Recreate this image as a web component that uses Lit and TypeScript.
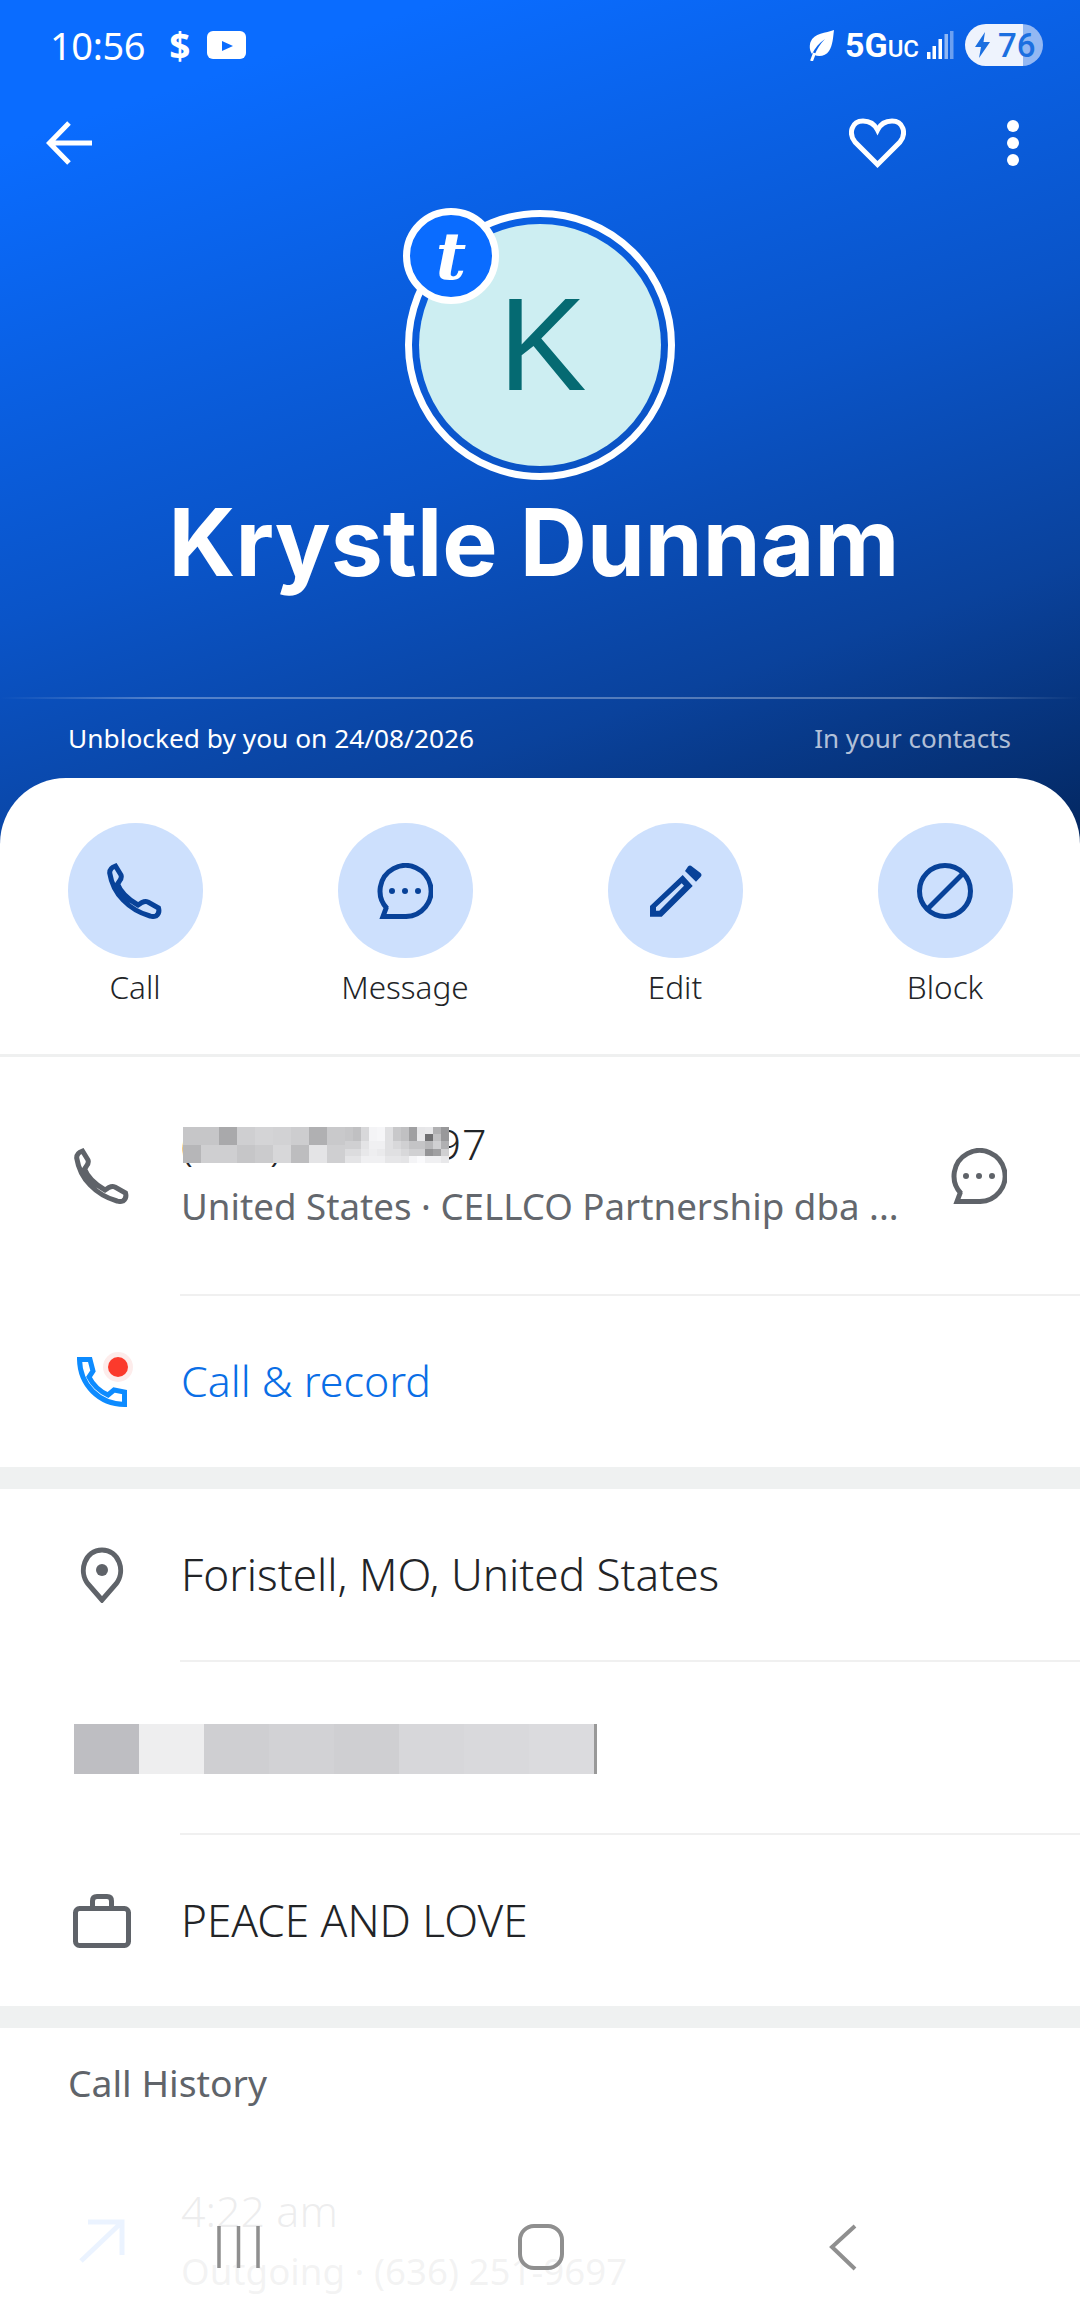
import { LitElement, html, css } from "lit";
import { customElement } from "lit/decorators.js";

const PHONE = "M8.5 3 L14 12 Q15 15 12.5 18 L10.5 21 Q15 33 31 42 L35 39.5 Q38 38 41 39 L51.5 45 Q53 50 49 53 Q46 54 43 53 C22 47 6 31 2.7 10 Q2.5 5 8.5 3 Z";

const phoneIcon = () => html`<svg class="stroke" width="56" height="56" viewBox="0 0 56 56"><path d=${PHONE} /></svg>`;

const messageIcon = () => html`<svg class="stroke" width="56" height="56" viewBox="0 0 56 56">
  <path d="M10 45.5 A25.5 25.5 0 1 1 28 53.5 H6 L9.5 44" />
  <circle class="solid" cx="15" cy="28" r="3" />
  <circle class="solid" cx="28" cy="28" r="3" />
  <circle class="solid" cx="41" cy="28" r="3" />
</svg>`;

const editIcon = () => html`<svg class="solid" width="56" height="56" viewBox="0 0 56 56">
  <path fill-rule="evenodd" d="M3 43 L35.7 12 L45.7 23 L14.7 53.7 H3 Z M9 44.3 V47.7 H12.3 L37 22.7 L34.7 20.3 Z" />
  <path d="M38 8 L41 3.5 Q43 1.5 45 3.5 L53.5 10 Q55.5 12 53.5 14 L49 18.7 Z" />
</svg>`;

const blockIcon = () => html`<svg class="stroke" width="56" height="56" viewBox="0 0 56 56">
  <circle cx="28" cy="28" r="25.5" />
  <path d="M10.5 46 L46 10.5" />
</svg>`;

const ACTIONS = [
  { label: "Call", icon: phoneIcon },
  { label: "Message", icon: messageIcon },
  { label: "Edit", icon: editIcon },
  { label: "Block", icon: blockIcon },
];

// mosaic over the phone number: big blocks first, then the finer part
const COARSE = [
  ["c6c6c8", "c6c6c8", "a9a9ab", "cfcfd1", "d4d4d6", "d2d2d4", "cdcdcf", "b0b0b2", "c9c9cb"],
  ["b6b6b8", "cfcfd1", "cfcfd1", "c6c6c8", "cbcbcd", "d7d7d9", "bdbdbf", "e4e4e6", "cfcfd1"],
];
const FINE = [
  [0xc6, 0xc0, 0xd8, 0xf4, 0xf6, 0xe0, 0xc8, 0xc0, 0xa0, 0xe6, 0xe8, 0xb0, 0x98],
  [0xc6, 0xc0, 0xd8, 0xf4, 0xf6, 0xe0, 0xc8, 0xc0, 0xa0, 0xe8, 0x70, 0xc0, 0x98],
  [0xd0, 0xd0, 0xe4, 0xf0, 0xf0, 0xe0, 0xd8, 0xd0, 0xc4, 0xc4, 0xb8, 0xd0, 0xb0],
  [0xdc, 0xdc, 0xe8, 0xee, 0xea, 0xe0, 0xe0, 0xd8, 0xd0, 0xd0, 0x94, 0xa0, 0xd0],
  [0xe4, 0xe4, 0xf0, 0xf0, 0xf0, 0xe6, 0xe6, 0xe4, 0xf4, 0xfa, 0xf0, 0xf0, 0xe8],
];
const NAME_BLOCKS = ["bebec2", "eeeeef", "cfcfd2", "d2d2d5", "cfcfd2", "d7d7da", "d9d9dc", "dbdbde"];

@customElement("app-root")
export class AppRoot extends LitElement {
  static styles = css`
    :host {
      display: block;
      width: 1080px;
      height: 2316px;
      overflow: hidden;
      position: relative;
      font-family: "Noto Sans", sans-serif;
      color: #222427;
      background: linear-gradient(162deg, #0a6cff 0%, #0a6cff 12%, #0a54c8 52%, #0a429c 76%, #03265e 100%) 0 0 / 1080px 850px no-repeat;
    }
    svg {
      display: block;
      flex: none;
    }
    .stroke {
      fill: none;
      stroke: currentColor;
      stroke-width: 5;
    }
    .solid {
      fill: currentColor;
      stroke: none;
    }

    /* status bar */
    .status {
      height: 90px;
      display: flex;
      align-items: center;
      justify-content: space-between;
      padding: 0 37px 0 50px;
      color: #fff;
    }
    .status-side {
      display: flex;
      align-items: center;
    }
    .time {
      font-size: 38px;
      letter-spacing: -0.4px;
    }
    .dollar {
      font-size: 37px;
      font-weight: 700;
      margin: 0 17px 0 24px;
    }
    .net {
      font-family: Roboto, sans-serif;
      font-weight: 700;
      font-size: 34px;
      margin: 0 8px 0 11px;
    }
    .net small {
      font-size: 24px;
      font-weight: 500;
    }
    .battery {
      width: 78px;
      height: 42px;
      margin-left: 11px;
      border-radius: 21px;
      background: linear-gradient(90deg, #eef3fd 74%, #93b8f3 74%);
      color: #1b6fe0;
      display: flex;
      align-items: center;
      padding-left: 10px;
      box-sizing: border-box;
      font-family: Roboto, sans-serif;
      font-weight: 500;
      font-size: 33px;
      gap: 8px;
    }

    /* toolbar */
    .toolbar {
      height: 106px;
      display: flex;
      align-items: center;
      padding: 0 61px 0 46px;
      color: #fff;
    }
    .toolbar .heart {
      margin-left: auto;
      margin-right: 101px;
    }

    /* avatar and name */
    .avatar {
      position: relative;
      width: 270px;
      height: 270px;
      margin: 14px auto 0;
      box-sizing: border-box;
      border: 7px solid #fff;
      border-radius: 50%;
      padding: 7px;
    }
    .avatar-fill {
      height: 100%;
      box-sizing: border-box;
      padding: 0 0 2px 5px;
      border-radius: 50%;
      background: #cdeef2;
      color: #056a72;
      display: flex;
      align-items: center;
      justify-content: center;
      font-family: "Liberation Sans", sans-serif;
      font-size: 132px;
    }
    .badge {
      position: absolute;
      left: -9px;
      top: -9px;
      width: 96px;
      height: 96px;
      box-sizing: border-box;
      border: 7px solid #fff;
      border-radius: 50%;
      background: #0a6cff;
      color: #fff;
      display: flex;
      align-items: center;
      justify-content: center;
      font-family: "DejaVu Serif", serif;
      font-style: italic;
      font-weight: 700;
      font-size: 66px;
      line-height: 1;
    }
    .name {
      height: 124px;
      line-height: 124px;
      text-align: center;
      padding-right: 12px;
      color: #fff;
      font-family: Inter, sans-serif;
      font-weight: 700;
      font-size: 93px;
      white-space: nowrap;
    }
    .rule {
      height: 2px;
      margin-top: 93px;
      background: linear-gradient(90deg, transparent, rgba(255, 255, 255, 0.3) 15%, rgba(255, 255, 255, 0.3) 85%, transparent);
    }
    .info {
      height: 77px;
      padding: 0 69px 2px 68px;
      display: flex;
      align-items: center;
      justify-content: space-between;
      font-size: 26.3px;
      color: #fff;
    }
    .info .dim {
      font-size: 26px;
      color: rgba(255, 255, 255, 0.7);
    }

    /* white sheet */
    .sheet {
      background: #fff;
      border-radius: 66px 66px 0 0;
      height: 1538px;
    }
    .actions {
      display: grid;
      grid-template-columns: repeat(4, 270px);
      height: 231px;
      padding-top: 45px;
      border-bottom: 3px solid #eff0f0;
    }
    .action {
      display: flex;
      flex-direction: column;
      align-items: center;
    }
    .action-circle {
      width: 135px;
      height: 135px;
      border-radius: 50%;
      background: #cde0fd;
      color: #084299;
      display: flex;
      align-items: center;
      justify-content: center;
    }
    .action-label {
      margin-top: 7px;
      line-height: 44px;
      font-size: 31.5px;
      font-weight: 300;
    }

    .row {
      height: 171px;
      display: flex;
      align-items: center;
      padding: 0 73px;
      color: #5f6369;
    }
    .row.tall {
      height: 237px;
    }
    .icon-box {
      width: 58px;
      margin-right: 50px;
      flex: none;
      display: flex;
      justify-content: center;
      position: relative;
    }
    .row-text {
      font-size: 44.1px;
      font-weight: 300;
      color: #222427;
      padding-bottom: 2px;
    }
    .row-text.link {
      color: #0a6ee6;
      font-size: 42.9px;
    }
    .lines {
      flex: 1;
      min-width: 0;
    }
    .line {
      line-height: 61px;
      font-size: 43px;
      font-weight: 300;
      color: #222427;
      white-space: nowrap;
    }
    .line.sub {
      font-size: 36.7px;
      font-weight: 400;
      color: #63676d;
    }
    .number {
      position: relative;
      letter-spacing: 0.85px;
      margin-top: -2px;
      margin-bottom: 2px;
    }
    .mosaic {
      position: absolute;
      left: 2px;
      top: 14px;
      display: flex;
    }
    .coarse {
      display: grid;
      grid-template-columns: repeat(9, 18px);
      grid-auto-rows: 18px;
    }
    .fine {
      display: grid;
      grid-template-columns: repeat(13, 8px);
      grid-auto-rows: 7.4px;
    }
    .divider {
      height: 2px;
      margin-left: 180px;
      background: #f0f0f0;
    }
    .band {
      height: 22px;
      background: #eff1f1;
    }
    .dot {
      position: absolute;
      right: 3px;
      top: 0;
      width: 20px;
      height: 20px;
      border-radius: 50%;
      background: #fb3a2c;
      box-shadow: 0 0 0 5px #fdeceb;
    }
    .name-blur {
      display: flex;
      height: 50px;
      margin: 3px 0 0 1px;
      border-right: 3px solid #999;
    }
    .name-blur div {
      width: 65px;
    }
    .history-title {
      height: 110px;
      line-height: 110px;
      padding-left: 68px;
      font-size: 37.3px;
      font-weight: 400;
      color: #60646a;
    }
    .history-row {
      display: flex;
      align-items: center;
      margin-top: 42px;
      padding-left: 73px;
      color: #0a6cff;
    }

    /* navigation bar lies over the scrolled list */
    .nav {
      position: absolute;
      left: 0;
      right: 0;
      bottom: 0;
      height: 176px;
      background: rgba(255, 255, 255, 0.92);
      color: #8f8f8f;
    }
    .nav svg {
      position: absolute;
      left: 0;
      top: 0;
    }
  `;

  render() {
    return html`
      <div class="status">
        <div class="status-side">
          <span class="time">10:56</span>
          <span class="dollar">$</span>
          <svg width="39" height="28" viewBox="0 0 39 28">
            <rect width="39" height="28" rx="6" fill="#fff" />
            <path d="M15 10 L26 15 L15 20 Z" fill="#0a6cff" />
          </svg>
        </div>
        <div class="status-side">
          <svg width="25" height="31" viewBox="0 0 25 31" fill="#fff">
            <path d="M25 0 C17 3 5 3 1.5 12 C0 17 1 21 3 24 C6 18 10 13 16 9 C11 14 8 19 5.5 25 C10 27 17 26 20 21 C24 15 24 7 25 0 Z" />
            <path d="M5.5 23 L2.5 31" stroke="#fff" stroke-width="3" />
          </svg>
          <span class="net">5G<small>UC</small></span>
          <svg width="27" height="29" viewBox="0 0 27 29" fill="#fff">
            <rect x="0" y="21" width="3.5" height="7" />
            <rect x="5.5" y="15" width="3.5" height="13" />
            <rect x="11.5" y="8" width="3.5" height="20" />
            <rect x="17.5" y="3" width="3.5" height="25" opacity="0.55" />
            <rect x="23" y="0" width="3.5" height="28" opacity="0.4" />
          </svg>
          <div class="battery">
            <svg width="15" height="26" viewBox="0 0 15 26" fill="currentColor"><path d="M10 0 L0 15 H6 L4 26 L15 10 H8.5 Z" /></svg>
            <span>76</span>
          </div>
        </div>
      </div>

      <div class="toolbar">
        <svg class="stroke" width="46" height="46" viewBox="0 0 46 46"><path d="M23 3 L3.5 23 L23 43 M3.5 23 H46" /></svg>
        <svg class="stroke heart" width="57" height="50" viewBox="0 0 57 50"><path d="M28.5 46.5 L6 24 C-1 15 3 3 14 3 C21 3 26 7 28.5 12 C31 7 36 3 43 3 C54 3 58 15 51 24 Z" /></svg>
        <svg class="solid" width="12" height="46" viewBox="0 0 12 46">
          <circle cx="6" cy="6" r="6" /><circle cx="6" cy="23" r="6" /><circle cx="6" cy="40" r="6" />
        </svg>
      </div>

      <div class="avatar">
        <div class="avatar-fill">K</div>
        <div class="badge">t</div>
      </div>
      <div class="name">Krystle Dunnam</div>
      <div class="rule"></div>
      <div class="info">
        <span>Unblocked by you on 24/08/2026</span>
        <span class="dim">In your contacts</span>
      </div>

      <div class="sheet">
        <div class="actions">
          ${ACTIONS.map(
            (a) => html`<div class="action">
              <div class="action-circle">${a.icon()}</div>
              <div class="action-label">${a.label}</div>
            </div>`
          )}
        </div>

        <div class="row tall">
          <div class="icon-box">${phoneIcon()}</div>
          <div class="lines">
            <div class="line number">
              (636) 251-9697
              <div class="mosaic">
                <div class="coarse">
                  ${COARSE.flat().map((c) => html`<div style="background:#${c}"></div>`)}
                </div>
                <div class="fine">
                  ${FINE.flat().map((v) => html`<div style="background:rgb(${v},${v},${v + 2})"></div>`)}
                </div>
              </div>
            </div>
            <div class="line sub">United States · CELLCO Partnership dba ...</div>
          </div>
          ${messageIcon()}
        </div>
        <div class="divider"></div>
        <div class="row">
          <div class="icon-box">
            <svg style="color:#0d8bff" class="stroke" width="50" height="50" viewBox="0 0 50 50">
              <path d="M2.5 2.5 H13 L16 14 L12 20 C16 28 22 34 31 38 L37 33 L47.5 35 V47.5 C22 47 3 28 2.5 2.5 Z" />
            </svg>
            <span class="dot"></span>
          </div>
          <div class="row-text link">Call &amp; record</div>
        </div>
        <div class="band"></div>

        <div class="row">
          <div class="icon-box">
            <svg class="stroke" width="46" height="56" viewBox="0 0 46 56">
              <path d="M23 53 L9 37 C-1 24 6 3 23 3 C40 3 47 24 37 37 Z" />
              <circle class="solid" cx="23" cy="23" r="6" />
            </svg>
          </div>
          <div class="row-text">Foristell, MO, United States</div>
        </div>
        <div class="divider"></div>
        <div class="row">
          <div class="name-blur">
            ${NAME_BLOCKS.map((c) => html`<div style="background:#${c}"></div>`)}
          </div>
        </div>
        <div class="divider"></div>
        <div class="row">
          <div class="icon-box">
            <svg class="stroke" width="58" height="54" viewBox="0 0 58 54">
              <rect x="2.5" y="14.5" width="53" height="37" rx="4" />
              <path d="M19.5 13 V7 Q19.5 2.5 24 2.5 H34 Q38.5 2.5 38.5 7 V13" />
            </svg>
          </div>
          <div class="row-text">PEACE AND LOVE</div>
        </div>
        <div class="band"></div>

        <div class="history-title">Call History</div>
        <div class="history-row">
          <div class="icon-box">
            <svg class="stroke" width="46" height="44" viewBox="0 0 46 44"><path d="M2 42 L42 4 M9 3 H43 V36" /></svg>
          </div>
          <div class="lines">
            <div class="line">4:22 am</div>
            <div class="line sub">Outgoing · (636) 251-9697</div>
          </div>
        </div>
      </div>

      <div class="nav">
        <svg width="1080" height="176" viewBox="0 0 1080 176" fill="none" stroke="currentColor">
          <path stroke-width="3.5" d="M219 86 V128 M238.5 86 V128 M258 86 V128" />
          <rect stroke-width="4" x="520" y="86" width="42" height="42" rx="14" />
          <path stroke-width="4" d="M855 86 L832 107 L855 129" />
        </svg>
      </div>
    `;
  }
}
